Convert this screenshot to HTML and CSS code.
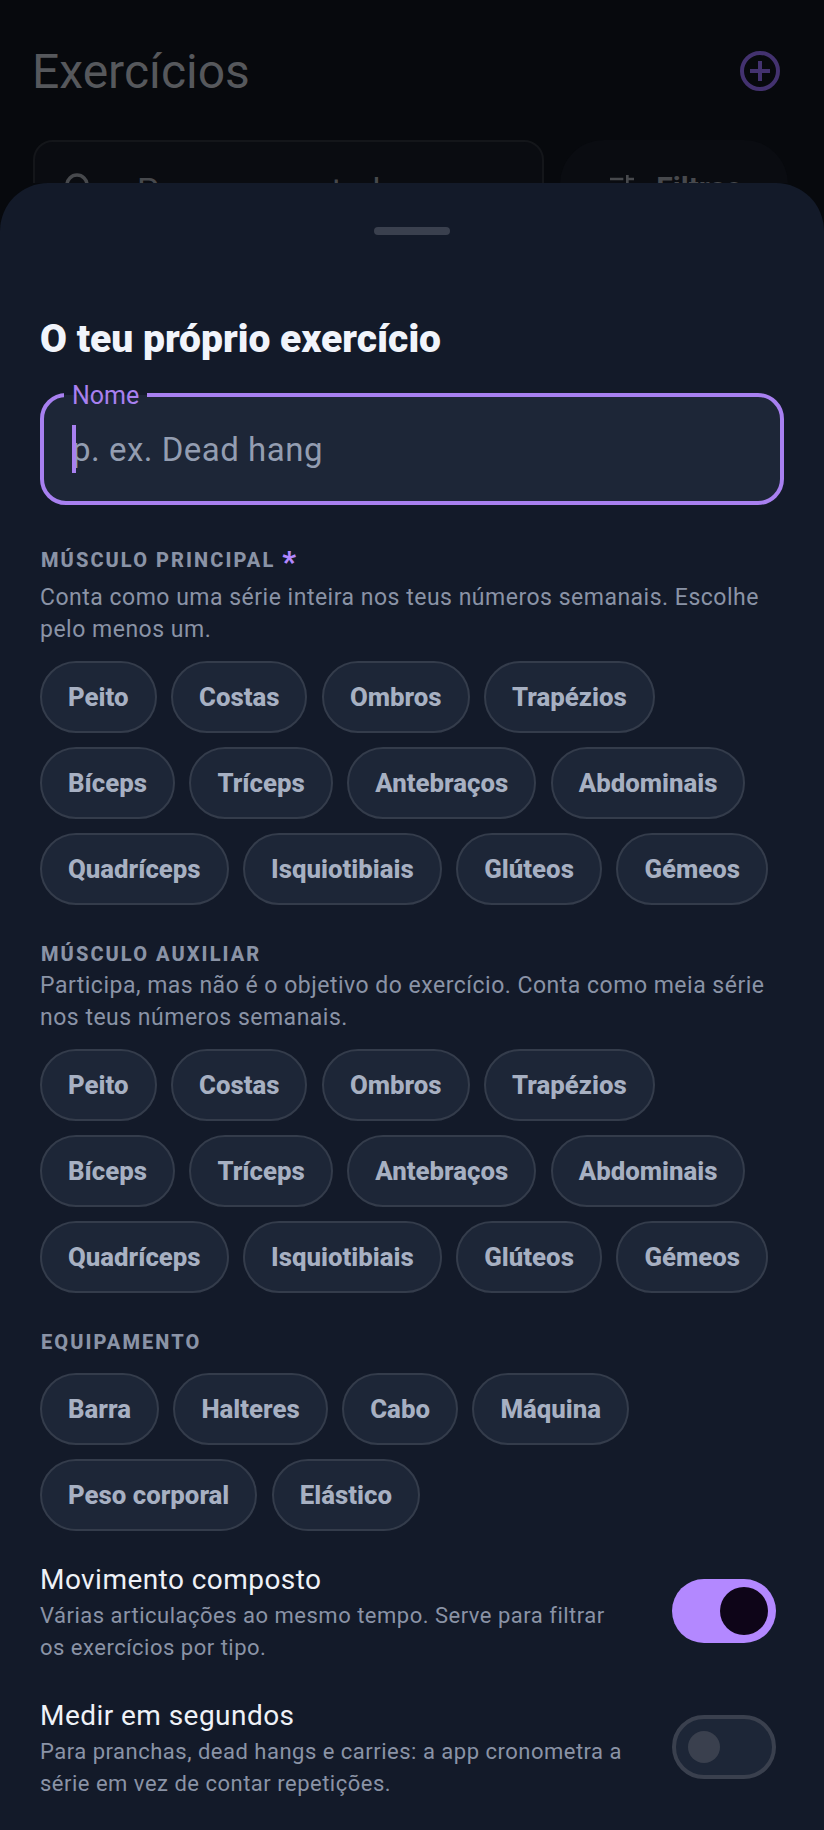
FILE: index.html
```html
<!DOCTYPE html>
<html lang="pt">
<head>
<meta charset="utf-8">
<title>Exercícios</title>
<link rel="stylesheet" href="styles.css">
</head>
<body>
<main class="backdrop">
  <header class="top">
    <h1 class="page-title">Exercícios</h1>
    <svg class="add" viewBox="0 0 40 40" aria-hidden="true"><circle cx="20" cy="20" r="18" fill="none" stroke="currentColor" stroke-width="4"/><path d="M20 10v20M10 20h20" fill="none" stroke="currentColor" stroke-width="4"/></svg>
  </header>
  <div class="tools">
    <div class="search">
      <svg class="search-icon" viewBox="0 0 32 32" aria-hidden="true"><circle cx="13" cy="13" r="10" fill="none" stroke="currentColor" stroke-width="3.5"/><path d="M20 20l10 10" fill="none" stroke="currentColor" stroke-width="3.5"/></svg>
      <span>Procurar em todos</span>
    </div>
    <div class="filter">
      <svg class="filter-icon" viewBox="0 0 24 24" aria-hidden="true"><path fill="currentColor" d="M3 17v2h6v-2H3zM3 5v2h10V5H3zm10 16v-2h8v-2h-8v-2h-2v6h2zM7 9v2H3v2h4v2h2V9H7zm14 4v-2H11v2h10zm-6-4h2V7h4V5h-4V3h-2v6z"/></svg>
      <span>Filtros</span>
    </div>
  </div>
</main>
<section class="sheet">
  <div class="handle"></div>
  <h2 class="sheet-title">O teu próprio exercício</h2>
  <div class="field">
    <span class="field-label">Nome</span>
    <span class="placeholder">p. ex. Dead hang</span>
    <span class="caret"></span>
  </div>

  <h3 class="label label-first">MÚSCULO PRINCIPAL <span class="star">*</span></h3>
  <p class="desc">Conta como uma série inteira nos teus números semanais. Escolhe pelo menos um.</p>
  <div class="chips chips-first">
    <span class="chip">Peito</span><span class="chip">Costas</span><span class="chip">Ombros</span><span class="chip">Trapézios</span>
    <span class="chip">Bíceps</span><span class="chip">Tríceps</span><span class="chip">Antebraços</span><span class="chip">Abdominais</span>
    <span class="chip">Quadríceps</span><span class="chip">Isquiotibiais</span><span class="chip">Glúteos</span><span class="chip">Gémeos</span>
  </div>

  <h3 class="label label-second">MÚSCULO AUXILIAR</h3>
  <p class="desc">Participa, mas não é o objetivo do exercício. Conta como meia série nos teus números semanais.</p>
  <div class="chips chips-after-desc">
    <span class="chip">Peito</span><span class="chip">Costas</span><span class="chip">Ombros</span><span class="chip">Trapézios</span>
    <span class="chip">Bíceps</span><span class="chip">Tríceps</span><span class="chip">Antebraços</span><span class="chip">Abdominais</span>
    <span class="chip">Quadríceps</span><span class="chip">Isquiotibiais</span><span class="chip">Glúteos</span><span class="chip">Gémeos</span>
  </div>

  <h3 class="label label-third">EQUIPAMENTO</h3>
  <div class="chips chips-tight">
    <span class="chip">Barra</span><span class="chip">Halteres</span><span class="chip">Cabo</span><span class="chip">Máquina</span>
    <span class="chip">Peso corporal</span><span class="chip">Elástico</span>
  </div>

  <div class="row row-first">
    <div class="row-text">
      <div class="row-title">Movimento composto</div>
      <p class="desc row-desc">Várias articulações ao mesmo tempo. Serve para filtrar os exercícios por tipo.</p>
    </div>
    <div class="toggle on"><span class="thumb"></span></div>
  </div>
  <div class="row row-second">
    <div class="row-text">
      <div class="row-title">Medir em segundos</div>
      <p class="desc row-desc">Para pranchas, dead hangs e carries: a app cronometra a série em vez de contar repetições.</p>
    </div>
    <div class="toggle off"><span class="thumb"></span></div>
  </div>
</section>
</body>
</html>
```
FILE: styles.css
```css
* { box-sizing: border-box; }
html, body { margin: 0; padding: 0; }
body {
  width: 824px;
  height: 1830px;
  overflow: hidden;
  background: #07090d;
  font-family: Roboto, "Liberation Sans", sans-serif;
  position: relative;
}
h1, h2, h3, p { margin: 0; font-weight: inherit; font-size: inherit; }

.backdrop { height: 183px; padding: 44px 33px 0; overflow: hidden; }
.top { display: flex; justify-content: space-between; align-items: center; height: 54px; padding-right: 11px; }
.page-title { font-size: 48px; font-weight: 400; line-height: 54px; color: #56585c; margin: 1px 0 0 -1px; }
.add { width: 40px; height: 40px; color: #43326f; }
.tools { display: flex; gap: 16px; margin-top: 42px; align-items: flex-start; }
.search {
  width: 511px; height: 100px; display: flex; align-items: center; gap: 41px; padding-left: 29px;
  background: #0a0c11; border: 2px solid #14161a; border-radius: 20px;
  font-size: 34px; color: #47494d;
}
.search-icon { width: 32px; height: 32px; color: #47494d; flex: none; margin-bottom: 4px; }
.filter {
  width: 228px; height: 94px; display: flex; align-items: center; justify-content: center; gap: 18px;
  background: #0a0c11; border-radius: 44px;
  font-size: 30px; font-weight: 700; color: #47494d;
}
.filter-icon { width: 32px; height: 32px; flex: none; }

.sheet {
  position: absolute; left: 0; right: 0; top: 183px; bottom: 0;
  background: #131a29;
  border-radius: 48px 48px 0 0;
  padding: 44px 40px 0;
}
.handle { width: 76px; height: 8px; border-radius: 4px; background: #3a404e; margin: 0 auto; }
.sheet-title { font-size: 39px; font-weight: 900; line-height: 46px; color: #f1f4fb; margin-top: 81px; }

.field {
  position: relative; height: 112px; margin-top: 31px;
  background: #1d2637; border: 4px solid #a880f0; border-radius: 26px;
  display: flex; align-items: center; padding-left: 28px;
}
.field-label {
  position: absolute; left: 20px; top: -15px; padding: 0 8px;
  font-size: 25px; line-height: 28px; color: #a880f0; background: linear-gradient(#131a29 46%, #1d2637 46%);
}
.caret { position: absolute; left: 28px; top: 28px; width: 4px; height: 48px; background: #a880f0; }
.placeholder { font-size: 33px; letter-spacing: 0.5px; color: #939db1; }

.label { font-size: 20px; font-weight: 800; letter-spacing: 2.07px; line-height: 28px; color: #8a93a6; padding-left: 1px; }
.label-first { margin-top: 41px; }
.label-second { margin-top: 35px; }
.label-third { margin-top: 35px; }
.star { color: #b388ff; font-size: 30px; line-height: 20px; vertical-align: -5px; }
.desc { font-size: 23px; line-height: 32px; letter-spacing: 0.5px; color: #8a93a6; }
.label-first + .desc { margin-top: 8px; }
.label-second + .desc { margin-top: 2px; }

.chips { display: flex; flex-wrap: wrap; gap: 14px 14.5px; margin-top: 16px; }
.chips-first { margin-top: 15px; }
.chips-after-desc { margin-top: 15px; }
.chips-tight { margin-top: 17px; }
.chip {
  height: 72px; padding: 0 26px; display: flex; align-items: center;
  background: #1d2637; border: 2px solid #343c4b; border-radius: 36px;
  font-size: 25.8px; font-weight: 800; color: #a7b0c2;
}

.row { display: flex; justify-content: space-between; align-items: center; padding-right: 8px; }
.row-first { margin-top: 31px; }
.row-second { margin-top: 34px; }
.row-text { width: 590px; }
.row-title { font-size: 28px; line-height: 36px; letter-spacing: 0.45px; color: #eef1f7; margin-bottom: 2px; }
.row-desc { font-size: 22px; }
.toggle { width: 104px; height: 64px; border-radius: 32px; display: flex; align-items: center; flex: none; margin-bottom: 4px; }
.toggle.on { background: #b388ff; justify-content: flex-end; padding-right: 8px; }
.toggle.on .thumb { width: 48px; height: 48px; border-radius: 50%; background: #0e0518; }
.toggle.off { background: #1d2637; border: 4px solid #3a404e; padding-left: 12px; }
.toggle.off .thumb { width: 32px; height: 32px; border-radius: 50%; background: #3a404e; }
```
